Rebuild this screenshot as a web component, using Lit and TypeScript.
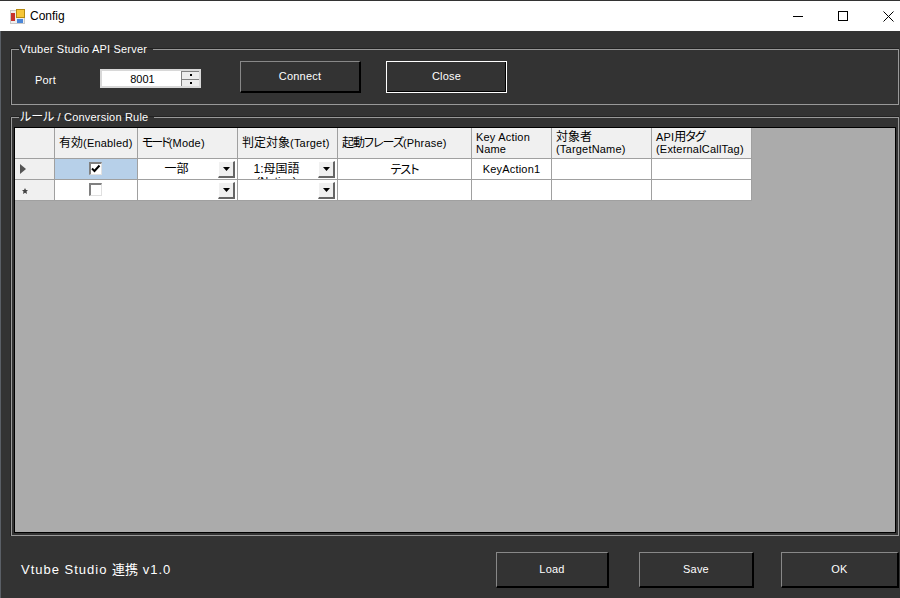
import { LitElement, css, html } from 'lit'
import { customElement } from 'lit/decorators.js'

const arrow = html`<svg class="arrow" width="7" height="4" viewBox="0 0 7 4"><path d="M0 0h7L3.5 4z" fill="#000" /></svg>`

@customElement('app-root')
export class AppRoot extends LitElement {
  static styles = css`
    :host {
      display: block;
      width: 900px;
      height: 598px;
      overflow: hidden;
      font-family: "Liberation Sans", "Noto Sans CJK JP", sans-serif;
      font-size: 11px;
      letter-spacing: 0.2px;
      color: #fff;
      background: #333;
    }
    .jp {
      font-size: 12px;
      letter-spacing: 0;
      font-feature-settings: "palt";
    }
    .jp.tight { letter-spacing: -1px; }
    .jp.tighter { letter-spacing: -2px; }
    .titlebar {
      display: flex;
      align-items: center;
      height: 30px;
      margin-top: 1px;
      background: #fff;
      color: #000;
    }
    .app-icon { margin-left: 10px; }
    .title { margin-left: 5px; flex: 1; font-size: 12px; letter-spacing: 0; }
    .winbtn {
      width: 45px;
      height: 30px;
      display: flex;
      align-items: center;
      justify-content: center;
    }
    .winbtn.last {
      width: 35px;
      box-sizing: border-box;
      padding-left: 18px;
      justify-content: flex-start;
    }
    .body {
      height: 567px;
      box-sizing: border-box;
      padding: 10px 1px 0 10px;
      border-left: 1px solid #5a5f66;
    }
    fieldset {
      margin: 0;
      min-width: 0;
      border: 1px solid #999;
      box-shadow: 0 -1px 0 #222, -1px 0 0 #222;
      padding: 0;
    }
    legend {
      margin-left: 7px;
      padding: 0 6px 0 1px;
      line-height: 16px;
      height: 16px;
    }
    .server {
      height: 64px;
      box-sizing: border-box;
      margin-bottom: 4px;
    }
    .server-row {
      display: flex;
      align-items: flex-start;
      padding: 4px 0 0 23px;
    }
    .port-label {
      width: 65px;
      margin-top: 11px;
      line-height: 16px;
    }
    .port {
      width: 101px;
      height: 19px;
      margin-top: 8px;
      margin-right: 39px;
      box-sizing: border-box;
      display: flex;
      background: #fff;
      color: #000;
      border: 2px solid #d8d8d8;
    }
    .port-value {
      flex: 1;
      text-align: center;
      line-height: 17px;
      letter-spacing: 0;
      padding-left: 2px;
    }
    .spin {
      width: 17px;
      display: flex;
      flex-direction: column;
      gap: 1px;
      padding: 1px 0 0 1px;
      background: #808080;
    }
    .spin i {
      flex: 1;
      background: #ececec;
      display: flex;
      align-items: center;
      justify-content: center;
    }
    .spin i::after {
      content: "";
      width: 2px;
      height: 2px;
      background: #000;
    }
    button {
      font: inherit;
      letter-spacing: inherit;
      color: #fff;
      background: #333;
      box-sizing: border-box;
      border-style: solid;
      border-width: 1px 2px 2px 1px;
      border-color: #888 #000 #000 #888;
      padding: 0 0 2px;
    }
    .connect { width: 121px; height: 32px; margin-right: 25px; }
    .close {
      width: 121px;
      height: 32px;
      border: 1px solid #fff;
      box-shadow: inset -1px -1px 0 #000;
    }
    .rule {
      height: 427px;
      box-sizing: border-box;
    }
    .rule-inner { padding: 2px 1px 0 2px; }
    .grid-view {
      height: 406px;
      box-sizing: border-box;
      margin-right: 1px;
      border: 1px solid #000;
      background: #ababab;
    }
    .grid {
      display: grid;
      grid-template-columns: 40px 83px 100px 100px 134px 80px 100px 100px;
      grid-template-rows: 31px 21px 21px;
      width: max-content;
      color: #000;
    }
    .cell {
      box-sizing: border-box;
      background: #fff;
      border-right: 1px solid #a0a0a0;
      border-bottom: 1px solid #a0a0a0;
      display: flex;
      align-items: center;
      justify-content: center;
      overflow: hidden;
      min-width: 0;
      padding-bottom: 1px;
    }
    .head {
      background: #f0f0f0;
      justify-content: flex-start;
      padding: 0 0 0 4px;
      line-height: 12px;
      white-space: pre-line;
    }
    .rowhead { background: #f0f0f0; justify-content: flex-start; padding-left: 5px; }
    .star { margin: 2px 0 0 2px; }
    .selected { background: #b7d0e9; }
    .check {
      width: 13px;
      height: 13px;
      margin-right: 2px;
      box-sizing: border-box;
      background: #fff;
      border-style: solid;
      border-width: 2px 1px 1px 2px;
      border-color: #808080 #e0e0e0 #e0e0e0 #808080;
    }
    .check svg { display: block; }
    .combo { justify-content: flex-start; padding: 0 2px 0 0; }
    .combo-text {
      flex: 1;
      min-width: 0;
      height: 20px;
      overflow: hidden;
      text-align: center;
      line-height: 12px;
      padding: 4px 3px 0 0;
      box-sizing: border-box;
    }
    .combo-btn {
      width: 17px;
      height: 17px;
      box-sizing: border-box;
      background: #f0f0f0;
      border-style: solid;
      border-width: 1px 2px 2px 1px;
      border-color: #fff #666 #666 #fff;
      display: flex;
      align-items: center;
      justify-content: center;
    }
    .footer {
      display: flex;
      align-items: flex-start;
      padding-top: 16px;
    }
    .version { flex: 1; margin: 7px 0 0 10px; font-size: 13px; letter-spacing: 1px; }
    .version .jp { font-size: 13px; }
    .load { width: 113px; height: 36px; margin-right: 30px; }
    .save { width: 115px; height: 36px; margin-right: 27px; }
    .ok { width: 118px; height: 36px; }
  `

  private combo(label: unknown) {
    return html`<div class="cell combo"><div class="combo-text">${label}</div><div class="combo-btn">${arrow}</div></div>`
  }

  render() {
    return html`
      <div class="titlebar">
        <svg class="app-icon" width="15" height="15" viewBox="0 0 15 15">
          <rect x="0" y="1" width="15" height="14" fill="#c9c9c9" />
          <rect x="1" y="2" width="13" height="12" fill="#eee" />
          <rect x="6.500" y=".5" width="8" height="8" fill="#f6c638" stroke="#b58a10" />
          <rect x="1" y="4" width="4" height="8" fill="#c8322c" />
          <rect x="7" y="10" width="6" height="4" fill="#4a86d8" />
        </svg>
        <span class="title">Config</span>
        <div class="winbtn"><svg width="10" height="10" viewBox="0 0 10 10"><path d="M0 5.500h10" stroke="#000" /></svg></div>
        <div class="winbtn"><svg width="10" height="10" viewBox="0 0 10 10"><rect x=".5" y=".5" width="9" height="9" fill="none" stroke="#000" /></svg></div>
        <div class="winbtn last"><svg width="11" height="11" viewBox="0 0 11 11"><path d="M.5 .5l10 10M10.500 .5l-10 10" stroke="#000" /></svg></div>
      </div>
      <div class="body">
        <fieldset class="server">
          <legend>Vtuber Studio API Server</legend>
          <div class="server-row">
            <span class="port-label">Port</span>
            <div class="port">
              <span class="port-value">8001</span>
              <div class="spin"><i></i><i></i></div>
            </div>
            <button class="connect">Connect</button>
            <button class="close">Close</button>
          </div>
        </fieldset>
        <fieldset class="rule">
          <legend><span class="jp">ルール</span> / Conversion Rule</legend>
          <div class="rule-inner">
            <div class="grid-view">
              <div class="grid">
                <div class="cell head"></div>
                <div class="cell head"><span><span class="jp">有効</span>(Enabled)</span></div>
                <div class="cell head"><span><span class="jp tighter">モード</span>(Mode)</span></div>
                <div class="cell head"><span><span class="jp">判定対象</span>(Target)</span></div>
                <div class="cell head"><span><span class="jp tight">起動フレーズ</span>(Phrase)</span></div>
                <div class="cell head">Key Action${'\n'}Name</div>
                <div class="cell head"><span><span class="jp">対象者</span>${'\n'}(TargetName)</span></div>
                <div class="cell head"><span>API<span class="jp tight">用タグ</span>${'\n'}(ExternalCallTag)</span></div>

                <div class="cell rowhead"><svg width="6" height="10" viewBox="0 0 6 10"><path d="M0 0l6 5-6 5z" fill="#555" /></svg></div>
                <div class="cell selected"><div class="check"><svg width="10" height="10" viewBox="0 0 10 10"><path d="M1 4.500l2.500 2.500L8.500 1.500" fill="none" stroke="#000" stroke-width="2" /></svg></div></div>
                ${this.combo(html`<span class="jp">一部</span>`)}
                ${this.combo(html`<span class="jp">1:母国語</span> (Native)`)}
                <div class="cell"><span class="jp tight">テスト</span></div>
                <div class="cell">KeyAction1</div>
                <div class="cell"></div>
                <div class="cell"></div>

                <div class="cell rowhead"><svg class="star" width="6" height="6" viewBox="0 0 6 6"><path d="M3 0l1 2h2L4.500 3.500 5 6 3 4.800 1 6l.5-2.500L0 2h2z" fill="#444" /></svg></div>
                <div class="cell"><div class="check"></div></div>
                ${this.combo('')}
                ${this.combo('')}
                <div class="cell"></div>
                <div class="cell"></div>
                <div class="cell"></div>
                <div class="cell"></div>
              </div>
            </div>
          </div>
        </fieldset>
        <div class="footer">
          <span class="version">Vtube Studio <span class="jp">連携</span> v1.0</span>
          <button class="load">Load</button>
          <button class="save">Save</button>
          <button class="ok">OK</button>
        </div>
      </div>
    `
  }
}
